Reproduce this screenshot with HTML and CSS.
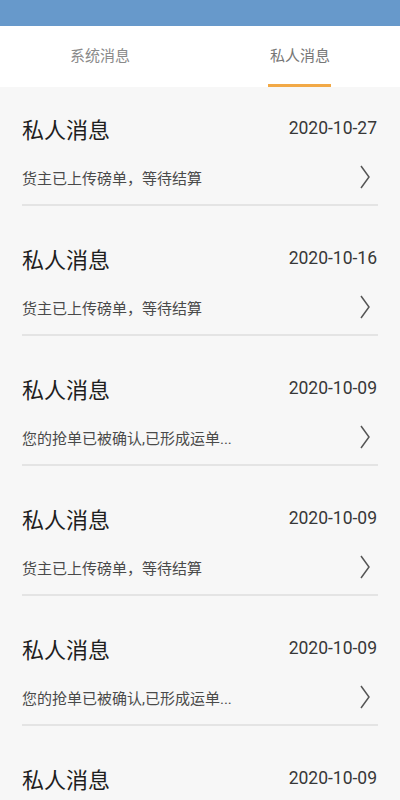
FILE: index.html
```html
<!DOCTYPE html>
<html lang="zh-CN">
<head>
    <meta charset="UTF-8">
    <meta name="viewport" content="width=device-width, initial-scale=1.0">
    <title>私人消息</title>
    <link rel="stylesheet" href="styles.css">
</head>
<body>

<div class="top-bar"></div>

<div class="tabs">
    <div class="tab">系统消息</div>
    <div class="tab active">私人消息</div>
</div>

<div class="msg-list">
    <div class="msg">
        <div class="msg-head">
            <span class="msg-title">私人消息</span>
            <span class="msg-date">2020-10-27</span>
        </div>
        <div class="msg-body">
            <span class="msg-text">货主已上传磅单，等待结算</span>
            <svg class="arrow" width="10" height="24" viewBox="0 0 10 24"><path d="M1 1 L9 12 L1 23" fill="none" stroke="#555" stroke-width="1.5"/></svg>
        </div>
    </div>
    <div class="msg">
        <div class="msg-head">
            <span class="msg-title">私人消息</span>
            <span class="msg-date">2020-10-16</span>
        </div>
        <div class="msg-body">
            <span class="msg-text">货主已上传磅单，等待结算</span>
            <svg class="arrow" width="10" height="24" viewBox="0 0 10 24"><path d="M1 1 L9 12 L1 23" fill="none" stroke="#555" stroke-width="1.5"/></svg>
        </div>
    </div>
    <div class="msg">
        <div class="msg-head">
            <span class="msg-title">私人消息</span>
            <span class="msg-date">2020-10-09</span>
        </div>
        <div class="msg-body">
            <span class="msg-text">您的抢单已被确认,已形成运单...</span>
            <svg class="arrow" width="10" height="24" viewBox="0 0 10 24"><path d="M1 1 L9 12 L1 23" fill="none" stroke="#555" stroke-width="1.5"/></svg>
        </div>
    </div>
    <div class="msg">
        <div class="msg-head">
            <span class="msg-title">私人消息</span>
            <span class="msg-date">2020-10-09</span>
        </div>
        <div class="msg-body">
            <span class="msg-text">货主已上传磅单，等待结算</span>
            <svg class="arrow" width="10" height="24" viewBox="0 0 10 24"><path d="M1 1 L9 12 L1 23" fill="none" stroke="#555" stroke-width="1.5"/></svg>
        </div>
    </div>
    <div class="msg">
        <div class="msg-head">
            <span class="msg-title">私人消息</span>
            <span class="msg-date">2020-10-09</span>
        </div>
        <div class="msg-body">
            <span class="msg-text">您的抢单已被确认,已形成运单...</span>
            <svg class="arrow" width="10" height="24" viewBox="0 0 10 24"><path d="M1 1 L9 12 L1 23" fill="none" stroke="#555" stroke-width="1.5"/></svg>
        </div>
    </div>
    <div class="msg">
        <div class="msg-head">
            <span class="msg-title">私人消息</span>
            <span class="msg-date">2020-10-09</span>
        </div>
        <div class="msg-body">
            <span class="msg-text">货主已上传磅单，等待结算</span>
            <svg class="arrow" width="10" height="24" viewBox="0 0 10 24"><path d="M1 1 L9 12 L1 23" fill="none" stroke="#555" stroke-width="1.5"/></svg>
        </div>
    </div>
</div>

</body>
</html>
```

FILE: styles.css
```css
body {
    font-family: Roboto, "Noto Sans CJK SC", sans-serif;
    margin: 0;
    background-color: #f7f7f7;
    height: 800px;
    overflow: hidden;
}
.top-bar {
    height: 26px;
    background-color: #6799cb;
}
.tabs {
    display: flex;
    height: 61px;
    background: white;
}
.tab {
    flex: 1;
    display: flex;
    justify-content: center;
    padding-top: 19px;
    font-size: 15px;
    line-height: 22px;
    color: #8a8a8a;
    position: relative;
}
.tab.active {
    color: #777;
}
.tab.active::after {
    content: "";
    position: absolute;
    bottom: 0;
    left: 68px;
    width: 63px;
    height: 3px;
    background-color: #f2a946;
}
.msg-list {
    padding: 0 22px;
}
.msg {
    padding: 38px 0 16px;
    border-bottom: 2px solid #e4e4e4;
}
.msg:first-child {
    padding-top: 27px;
}
.msg-head {
    display: flex;
    justify-content: space-between;
    align-items: center;
    height: 28px;
}
.msg-title {
    font-size: 22px;
    color: #1e1e1e;
}
.msg-date {
    font-size: 17.5px;
    color: #383838;
    margin-right: 1px;
}
.msg-body {
    display: flex;
    justify-content: space-between;
    align-items: center;
    height: 22px;
    margin-top: 24px;
}
.msg-text {
    font-size: 15px;
    color: #4a4a4a;
}
.arrow {
    margin-right: 8px;
}
```
